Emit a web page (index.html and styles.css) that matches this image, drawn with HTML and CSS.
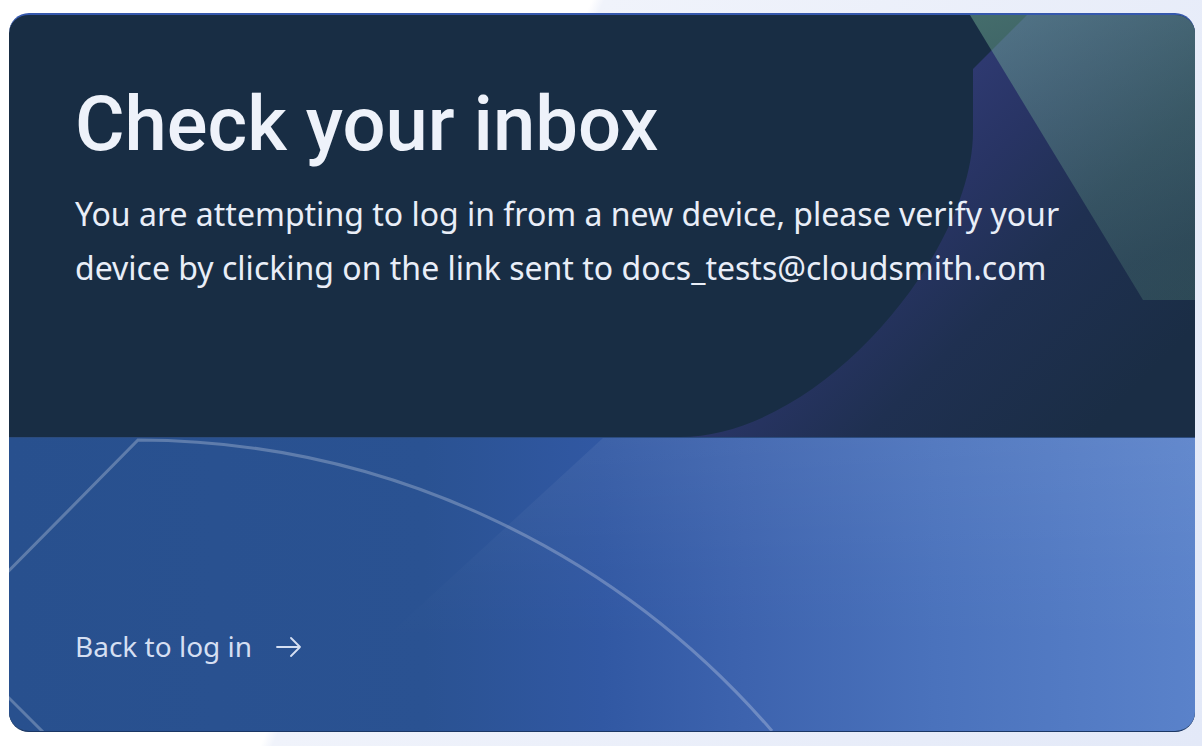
FILE: index.html
```html
<!DOCTYPE html>
<html lang="en">
<head>
<meta charset="utf-8">
<title>Check your inbox</title>
<link rel="stylesheet" href="styles.css">
</head>
<body>
<main class="card">
  <svg class="card-art" viewBox="0 0 1186 716" preserveAspectRatio="none" aria-hidden="true">
    <defs>
      <linearGradient id="purple" gradientUnits="userSpaceOnUse" x1="500" y1="500" x2="750" y2="750">
        <stop offset="0" stop-color="#2f3a72"/>
        <stop offset="0.25" stop-color="#283464"/>
        <stop offset="0.55" stop-color="#1f3051"/>
        <stop offset="1" stop-color="#1a2d45"/>
      </linearGradient>
      <linearGradient id="teal" x1="0" y1="0" x2="0.3" y2="1">
        <stop offset="0" stop-color="rgb(130,197,163)" stop-opacity="0.42"/>
        <stop offset="1" stop-color="rgb(104,161,136)" stop-opacity="0.24"/>
      </linearGradient>
      <linearGradient id="wedge" x1="0" y1="0" x2="0" y2="1">
        <stop offset="0" stop-color="#ffffff" stop-opacity="0.06"/>
        <stop offset="0.45" stop-color="#ffffff" stop-opacity="0.015"/>
        <stop offset="0.7" stop-color="#ffffff" stop-opacity="0"/>
      </linearGradient>
    </defs>
    <path d="M1018 0 L1186 0 L1186 422 L671 422 C811 422 964 237 964 117 L964 54 Z" fill="url(#purple)"/>
    <path d="M961 0 L1186 0 L1186 285 L1134 285 Z" fill="url(#teal)"/>
    <path d="M594 423 L1186 423 L1186 716 L275 716 Z" fill="url(#wedge)"/>
    <path d="M-20 576 L129 425 A840 840 0 0 1 763 716" fill="none" stroke="rgba(255,255,255,0.25)" stroke-width="3"/>
    <path d="M-10 673 L50 733" fill="none" stroke="rgba(255,255,255,0.25)" stroke-width="3"/>
  </svg>
  <section class="intro">
    <h1 class="title">Check your inbox</h1>
    <p class="message">You are attempting to log in from a new device, please verify your device by clicking on the link sent to docs_tests@cloudsmith.com</p>
  </section>
  <section class="actions">
    <a class="back-link" href="#">Back to log in
      <svg class="arrow" viewBox="0 0 26 20" aria-hidden="true">
        <path d="M1 10 H24 M15 1 L24 10 L15 19" fill="none" stroke="currentColor" stroke-width="1.8" stroke-linecap="round" stroke-linejoin="round"/>
      </svg>
    </a>
  </section>
</main>
</body>
</html>
```

FILE: styles.css
```css
* {
  box-sizing: border-box;
}

html, body {
  margin: 0;
  height: 100%;
}

body {
  background: linear-gradient(114deg, #ffffff 0%, #ffffff 38.6%, #f0f3fb 39.4%, #e3e9f8 100%);
  font-family: "Noto Sans", "Open Sans", sans-serif;
  overflow: hidden;
}

.card {
  position: relative;
  margin: 13px 0 0 9px;
  width: 1186px;
  height: 719px;
  border-radius: 20px;
  border-top: 2px solid #3558ad;
  border-bottom: 1px solid #1b3765;
  background: #182d44;
  overflow: hidden;
  display: flex;
  flex-direction: column;
}

.card-art {
  position: absolute;
  left: 0;
  top: 0;
  width: 1186px;
  height: 716px;
  z-index: 1;
  pointer-events: none;
}

.intro {
  height: 422px;
  padding: 64px 66px 0 66px;
  position: relative;
  z-index: 2;
}

.actions {
  flex: 1;
  border-top: 1px solid #2b4b7e;
  background: linear-gradient(90deg, #28508e 0%, #2a5292 35%, #3158a3 50%, #3d63ae 62%, #4a72bc 78%, #5a82ca 100%);
  padding: 0 66px 65px 66px;
  display: flex;
  align-items: flex-end;
}

.actions .back-link {
  position: relative;
  z-index: 2;
}

.title {
  margin: 0;
  font-family: Roboto, "Liberation Sans", sans-serif;
  font-weight: 500;
  font-size: 76px;
  line-height: 90px;
  letter-spacing: 0;
  color: #eef2fa;
}

.message {
  margin: 18px 0 0 0;
  font-size: 32px;
  line-height: 54px;
  color: #e9eef8;
  max-width: 1045px;
}

.back-link {
  display: flex;
  align-items: center;
  gap: 24px;
  font-size: 28px;
  line-height: 40px;
  color: #d5dff2;
  text-decoration: none;
}

.arrow {
  width: 26px;
  height: 20px;
  margin-top: 2px;
}
```
